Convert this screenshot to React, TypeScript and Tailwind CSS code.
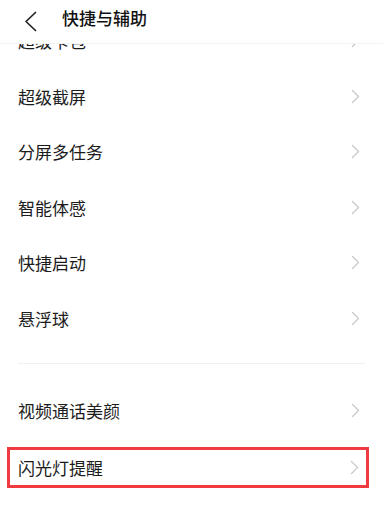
import React from "react";

const Chevron = () => (
  <svg width="9" height="15" viewBox="0 0 9 15" fill="none" className="shrink-0">
    <path d="M1.5 1.5 L7.5 7.5 L1.5 13.5" stroke="#c9c9c9" strokeWidth="1.3" strokeLinecap="round" strokeLinejoin="round" />
  </svg>
);

const Row = ({ label }: { label: string }) => (
  <div className="flex h-[55.5px] items-center justify-between pl-[18px] pr-[23px]">
    <span className="text-[17px] leading-none text-[#1c1c1c]">{label}</span>
    <Chevron />
  </div>
);

export default function App() {
  return (
    <div
      className="flex h-[505px] w-[383px] flex-col overflow-hidden bg-white"
      style={{ fontFamily: '"Noto Sans CJK SC", "Noto Sans", sans-serif' }}
    >
      <div className="relative z-10 flex h-[44px] shrink-0 items-center border-b border-[#f2f2f2] bg-white">
        <div className="flex w-[62px] justify-center pl-[0px]">
          <svg width="14" height="21" viewBox="0 0 14 21" fill="none" className="ml-[0px]">
            <path d="M11.5 1.5 L2 10.5 L11.5 19.5" stroke="#222" strokeWidth="1.7" strokeLinecap="round" strokeLinejoin="round" />
          </svg>
        </div>
        <span className="-mt-[8px] text-[17px] leading-none font-medium text-[#111]">快捷与辅助</span>
      </div>
      <div className="flex-1 overflow-hidden">
        <div className="-mt-[31px]">
          <Row label="超级卡包" />
          <Row label="超级截屏" />
          <Row label="分屏多任务" />
          <Row label="智能体感" />
          <Row label="快捷启动" />
          <Row label="悬浮球" />
          <div className="mx-[18px] mt-[17px] h-px bg-[#f0f0f0]" />
          <div className="mt-[19px]">
            <Row label="视频通话美颜" />
          </div>
          <div className="mt-[8px] ml-[7px] flex h-[41px] w-[362px] items-center justify-between border-[3px] border-[#f23b3f] pl-[8px] pr-[7px]">
            <span className="text-[17px] leading-none text-[#1c1c1c]">闪光灯提醒</span>
            <Chevron />
          </div>
        </div>
      </div>
    </div>
  );
}
